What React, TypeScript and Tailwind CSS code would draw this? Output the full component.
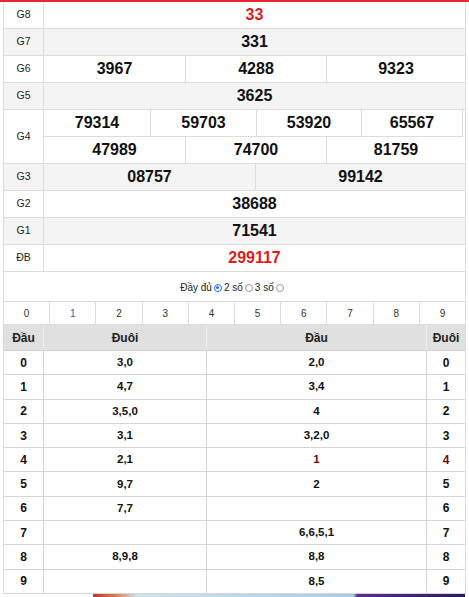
import React from "react";

const RED = "text-[#e01b1b]";

function Row({
  label,
  gray,
  children,
}: {
  label: string;
  gray?: boolean;
  children: React.ReactNode;
}) {
  return (
    <div className={`flex h-[27px] border-b border-[#dcdcdc] ${gray ? "bg-[#f4f4f4]" : "bg-white"}`}>
      <div className="w-[40px] shrink-0 border-r border-[#dcdcdc] flex items-center justify-center text-[10.5px] text-[#222]">
        {label}
      </div>
      <div className="flex-1 flex">{children}</div>
    </div>
  );
}

function Cells({ values, red, widths }: { values: string[]; red?: boolean; widths?: string[] }) {
  return (
    <>
      {values.map((v, i) => (
        <div
          key={i}
          className={`${widths ? widths[i] : "flex-1"} flex items-center justify-center text-[16px] font-bold ${
            red ? RED : "text-[#111]"
          } ${i > 0 ? "border-l border-[#dcdcdc]" : ""}`}
        >
          {v}
        </div>
      ))}
    </>
  );
}

const loto: [string, string, string, string, string?][] = [
  ["0", "3,0", "2,0", "0"],
  ["1", "4,7", "3,4", "1"],
  ["2", "3,5,0", "4", "2"],
  ["3", "3,1", "3,2,0", "3"],
  ["4", "2,1", "1", "4", "hl"],
  ["5", "9,7", "2", "5"],
  ["6", "7,7", "", "6"],
  ["7", "", "6,6,5,1", "7"],
  ["8", "8,9,8", "8,8", "8"],
  ["9", "", "8,5", "9"],
];

function Radio({ checked }: { checked?: boolean }) {
  return (
    <span
      className={`inline-block w-[8px] h-[8px] rounded-full border mx-[2px] ${
        checked ? "border-[#1a73e8] bg-white" : "border-[#999] bg-white"
      } relative`}
    >
      {checked && <span className="absolute inset-[1.5px] rounded-full bg-[#1a73e8]" />}
    </span>
  );
}

export default function App() {
  return (
    <div
      className="w-[469px] h-[597px] bg-white overflow-hidden text-[#222]"
      style={{ fontFamily: '"Liberation Sans", Arial, sans-serif' }}
    >
      <div className="h-[2px] bg-[#e8262d]" />
      <div className="ml-[3px] w-[463px] border-x border-[#dcdcdc]">
        <Row label="G8">
          <Cells values={["33"]} red />
        </Row>
        <Row label="G7" gray>
          <Cells values={["331"]} />
        </Row>
        <Row label="G6">
          <Cells values={["3967", "4288", "9323"]} widths={["w-[141px]", "w-[141px]", "flex-1"]} />
        </Row>
        <Row label="G5" gray>
          <Cells values={["3625"]} />
        </Row>
        <div className="flex border-b border-[#dcdcdc] bg-white">
          <div className="w-[40px] shrink-0 border-r border-[#dcdcdc] flex items-center justify-center text-[10.5px] text-[#222]">
            G4
          </div>
          <div className="flex-1 flex flex-col">
            <div className="flex h-[27px] border-b border-[#dcdcdc] mr-[2px] border-r">
              <Cells
                values={["79314", "59703", "53920", "65567"]}
                widths={["w-[106px]", "w-[106px]", "w-[105px]", "flex-1"]}
              />
            </div>
            <div className="flex h-[26px]">
              <Cells values={["47989", "74700", "81759"]} widths={["w-[141px]", "w-[141px]", "flex-1"]} />
            </div>
          </div>
        </div>
        <Row label="G3" gray>
          <Cells values={["08757", "99142"]} widths={["w-[211px]", "flex-1"]} />
        </Row>
        <Row label="G2">
          <Cells values={["38688"]} />
        </Row>
        <Row label="G1" gray>
          <Cells values={["71541"]} />
        </Row>
        <Row label="ĐB">
          <Cells values={["299117"]} red />
        </Row>

        <div className="h-[29px] flex items-center justify-center text-[10px] text-[#222] pt-[2px] pr-[3px]">
          <span>Đầy đủ</span>
          <Radio checked />
          <span>2 số</span>
          <Radio />
          <span>3 số</span>
          <Radio />
        </div>

        <div className="flex h-[24px] border-y border-[#dcdcdc]">
          {["0", "1", "2", "3", "4", "5", "6", "7", "8", "9"].map((d, i) => (
            <div
              key={d}
              className={`flex-1 flex items-center justify-center text-[10px] ${
                d === "1" ? "text-[#1f5fbf]" : "text-[#333]"
              } ${i < 9 ? "border-r border-[#dcdcdc]" : ""}`}
            >
              {d}
            </div>
          ))}
        </div>

        <div className="flex h-[26px] bg-[#e0e0e0] border-b border-[#d0d0d0] text-[12px] font-bold text-[#222]">
          <div className="w-[40px] flex items-center justify-center border-r border-[#eeeeee]">Đầu</div>
          <div className="w-[163px] flex items-center justify-center border-r border-[#eeeeee]">Đuôi</div>
          <div className="w-[220px] flex items-center justify-center border-r border-[#eeeeee]">Đầu</div>
          <div className="flex-1 flex items-center justify-center">Đuôi</div>
        </div>

        {loto.map(([a, b, c, d, hl]) => (
          <div key={a} className="flex h-[24.3px] border-b border-[#d6d6d6] text-[11.5px] font-bold text-[#111]">
            <div className="w-[40px] flex items-center justify-center border-r border-[#d6d6d6] text-[12px]">{a}</div>
            <div className="w-[163px] flex items-center justify-center border-r border-[#d6d6d6]">{b}</div>
            <div
              className={`w-[220px] flex items-center justify-center border-r border-[#d6d6d6] ${
                hl ? "text-[#6b0f0f]" : ""
              }`}
            >
              {c}
            </div>
            <div className={`flex-1 flex items-center justify-center text-[12px] ${hl ? "text-[#6b0f0f]" : ""}`}>
              {d}
            </div>
          </div>
        ))}
      </div>
      <div className="ml-[93px] w-[372px] h-[3px] bg-[linear-gradient(90deg,#b8392c_0%,#d8804a_6%,#cfe3ef_12%,#a8cbe4_70%,#5a2d90_71%,#2b1b5e_100%)]" />
    </div>
  );
}
